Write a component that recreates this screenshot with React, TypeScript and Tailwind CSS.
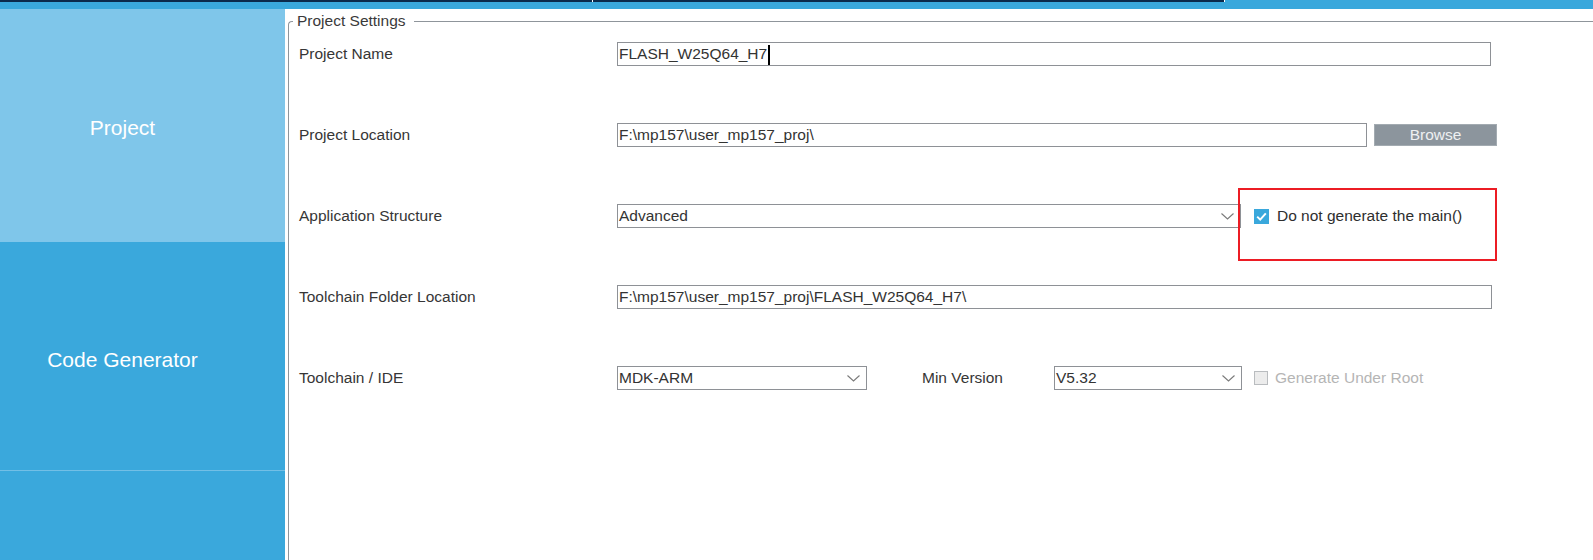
import React from "react";

function Chevron() {
  return (
    <svg width="13" height="7" viewBox="0 0 13 7" className="shrink-0">
      <polyline points="0.5,0.5 6.5,6 12.5,0.5" fill="none" stroke="#7a7a7a" strokeWidth="1.1" />
    </svg>
  );
}

function TextBox({ width, children }: { width: string; children?: React.ReactNode }) {
  return (
    <div className={`${width} h-[24px] border border-[#8e9196] flex items-center pl-[1px] bg-white text-[#333] whitespace-nowrap overflow-hidden`}>
      {children}
    </div>
  );
}

function Select({ width, value }: { width: string; value: string }) {
  return (
    <div className={`${width} h-[24px] border border-[#8e9196] flex items-center justify-between pl-[1px] pr-[6px] bg-white text-[#333] whitespace-nowrap`}>
      <span>{value}</span>
      <Chevron />
    </div>
  );
}

function Label({ children }: { children: React.ReactNode }) {
  return <div className="w-[328px] pl-[10px] shrink-0 text-[#363636] whitespace-nowrap">{children}</div>;
}

export default function App() {
  return (
    <div className="w-[1593px] h-[560px] bg-white flex flex-col overflow-hidden font-['Liberation_Sans',Arial,sans-serif] text-[15.5px]">
      {/* window tab strip */}
      <div className="h-[9px] flex flex-col shrink-0">
        <div className="h-[2px] flex">
          <div className="w-[592px] bg-[#0b2a4c]" />
          <div className="w-px bg-white" />
          <div className="w-[631px] bg-[#0b2a4c]" />
          <div className="w-px bg-white" />
          <div className="flex-1 bg-[#3aa8dc]" />
        </div>
        <div className="flex-1 bg-[#3aa8dc]" />
      </div>

      <div className="flex flex-1 min-h-0">
        {/* side navigation */}
        <aside className="w-[285px] shrink-0 flex flex-col text-white text-[21px]">
          <div className="h-[233px] bg-[#7fc6ea] flex items-center justify-center pr-[40px] pt-[5px]">Project</div>
          <div className="h-[229px] bg-[#3aa8dc] border-b border-[#72bfe6] flex items-center justify-center pr-[40px] pt-[7px]">
            Code Generator
          </div>
          <div className="flex-1 bg-[#3aa8dc]" />
        </aside>

        <fieldset className="flex-1 min-w-0 ml-[3px] border-l border-t border-[#8f959b] rounded-tl-[4px]">
          <legend className="ml-[4px] pl-[4px] pr-[8px] leading-[24px] text-[#3a3a3a]">Project Settings</legend>
          <div className="flex flex-col gap-[57px] pt-[9px]">
            <div className="flex items-center h-[24px]">
              <Label>Project Name</Label>
              <TextBox width="w-[874px]">
                <span>FLASH_W25Q64_H7</span>
                <span className="inline-block w-[2px] h-[20px] bg-black ml-[1px] mt-[1px]" />
              </TextBox>
            </div>

            <div className="flex items-center h-[24px]">
              <Label>Project Location</Label>
              <TextBox width="w-[750px]">F:\mp157\user_mp157_proj\</TextBox>
              <button className="ml-[7px] w-[123px] h-[22px] bg-[#8c959d] border border-[#a3abb1] text-[#eef0f2] flex items-center justify-center">
                Browse
              </button>
            </div>

            <div className="flex items-center h-[24px]">
              <Label>Application Structure</Label>
              <Select width="w-[624px]" value="Advanced" />
              <div className="relative ml-[13px] h-[24px] flex items-center gap-[8px]">
                <span className="w-[15px] h-[15px] bg-[#3aa8dc] flex items-center justify-center">
                  <svg width="15" height="15" viewBox="0 0 15 15">
                    <polyline points="3.2,7.6 6.2,10.6 11.8,4.4" fill="none" stroke="#ffffff" strokeWidth="2" />
                  </svg>
                </span>
                <span className="text-[#2e2e2e] whitespace-nowrap">Do not generate the main()</span>
                <div className="absolute left-[-16px] top-[-16px] w-[259px] h-[73px] border-2 border-[#ec1c24] pointer-events-none" />
              </div>
            </div>

            <div className="flex items-center h-[24px]">
              <Label>Toolchain Folder Location</Label>
              <TextBox width="w-[875px]">F:\mp157\user_mp157_proj\FLASH_W25Q64_H7\</TextBox>
            </div>

            <div className="flex items-center h-[24px]">
              <Label>Toolchain / IDE</Label>
              <Select width="w-[250px]" value="MDK-ARM" />
              <div className="ml-[55px] w-[132px] text-[#363636] whitespace-nowrap">Min Version</div>
              <Select width="w-[188px]" value="V5.32" />
              <div className="ml-[12px] flex items-center gap-[7px]">
                <span className="w-[14px] h-[14px] border border-[#b9bcbf] bg-[#ececec]" />
                <span className="text-[#b5b5b5] whitespace-nowrap">Generate Under Root</span>
              </div>
            </div>
          </div>
        </fieldset>
      </div>
    </div>
  );
}
